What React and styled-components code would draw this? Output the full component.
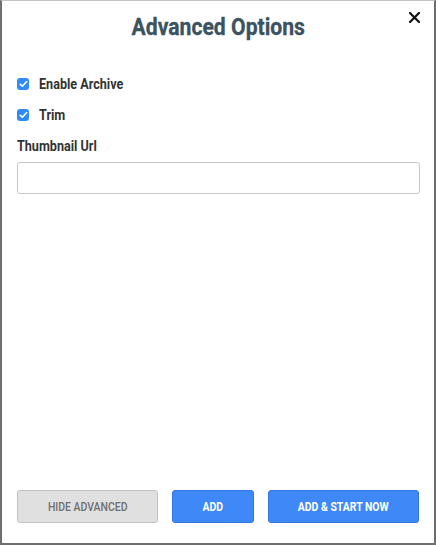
import React from 'react';
import styled, { createGlobalStyle } from 'styled-components';

const Global = createGlobalStyle`
  html, body { margin: 0; padding: 0; height: 100%; background: #6a6a6a; }
  #root { height: 100%; }
  * { box-sizing: border-box; }
`;

const Modal = styled.div`
  height: 100vh;
  background: #fff;
  border-top: 1px solid #c4c4c4;
  border-left: 2px solid #6e6e6e;
  border-right: 2px solid #6e6e6e;
  border-bottom: 2px solid #6e6e6e;
  display: flex;
  flex-direction: column;
  font-family: Roboto, "Liberation Sans", sans-serif;
  position: relative;
`;

const Header = styled.div`
  display: flex;
  justify-content: center;
  padding-top: 13px;
  height: 67px;
`;

const Title = styled.h1`
  margin: 0;
  font-size: 23px;
  font-weight: 700;
  color: #3b5260;
  transform: scaleX(0.92);
  -webkit-text-stroke: 0.3px #3b5260;
`;

const Close = styled.button`
  position: absolute;
  top: 8px;
  right: 12px;
  border: none;
  background: none;
  padding: 0;
  width: 16px;
  height: 16px;
  display: flex;
  align-items: center;
  justify-content: center;
  cursor: pointer;
`;

const Body = styled.div`
  flex: 1;
  padding: 0 14px 0 15px;
  display: flex;
  flex-direction: column;
`;

const CheckRow = styled.label`
  display: flex;
  align-items: center;
  gap: 10px;
  height: 31px;
`;

const Box = styled.span`
  width: 12px;
  height: 12px;
  border-radius: 3px;
  background: #2f8cf4;
  display: flex;
  align-items: center;
  justify-content: center;
`;

const Label = styled.span`
  font-size: 14px;
  font-weight: 700;
  color: #333;
  display: inline-block;
  transform: scaleX(0.9);
  transform-origin: left center;
`;

const Field = styled.div`
  margin-top: 8px;
  display: flex;
  flex-direction: column;
  gap: 8px;
`;

const Input = styled.input`
  height: 32px;
  width: 100%;
  border: 1px solid #c8c8c8;
  border-radius: 3px;
  outline: none;
  font-family: inherit;
  font-size: 14px;
  padding: 0 8px;
`;

const Footer = styled.div`
  display: flex;
  gap: 14px;
  padding: 0 14px 20px 15px;
`;

const Button = styled.button`
  height: 33px;
  width: ${p => p.$w}px;
  border-radius: 3px;
  font-family: Roboto, "Liberation Sans", sans-serif;
  font-size: 12px;
  font-weight: ${p => p.$muted ? 500 : 700};
  text-transform: uppercase;
  background: ${p => p.$muted ? '#e0e0e0' : '#3f88f7'};
  color: ${p => p.$muted ? '#6f6f6f' : '#fff'};
  border: 1px solid ${p => p.$muted ? '#c2c2c2' : '#2f76e4'};
  cursor: pointer;
  padding: 0;
`;

const ButtonText = styled.span`
  display: inline-block;
  transform: scaleX(0.87);
`;

const Check = () => (
  <svg width="9" height="8" viewBox="0 0 9 8">
    <path d="M1.3 4.3 L3.4 6.2 L7.7 1.5" fill="none" stroke="#fff" strokeWidth="1.6" strokeLinecap="round" strokeLinejoin="round" />
  </svg>
);

export default function App() {
  return (
    <>
      <Global />
      <Modal>
        <Header>
          <Title>Advanced Options</Title>
        </Header>
        <Close aria-label="close">
          <svg width="11" height="11" viewBox="0 0 11 11">
            <path d="M1 1 L10 10 M10 1 L1 10" stroke="#111" strokeWidth="2.2" strokeLinecap="square" />
          </svg>
        </Close>
        <Body>
          <CheckRow>
            <Box><Check /></Box>
            <Label>Enable Archive</Label>
          </CheckRow>
          <CheckRow>
            <Box><Check /></Box>
            <Label>Trim</Label>
          </CheckRow>
          <Field>
            <Label>Thumbnail Url</Label>
            <Input type="text" />
          </Field>
        </Body>
        <Footer>
          <Button $muted $w={141}><ButtonText>Hide Advanced</ButtonText></Button>
          <Button $w={82}><ButtonText>Add</ButtonText></Button>
          <Button $w={151}><ButtonText>Add &amp; Start Now</ButtonText></Button>
        </Footer>
      </Modal>
    </>
  );
}
